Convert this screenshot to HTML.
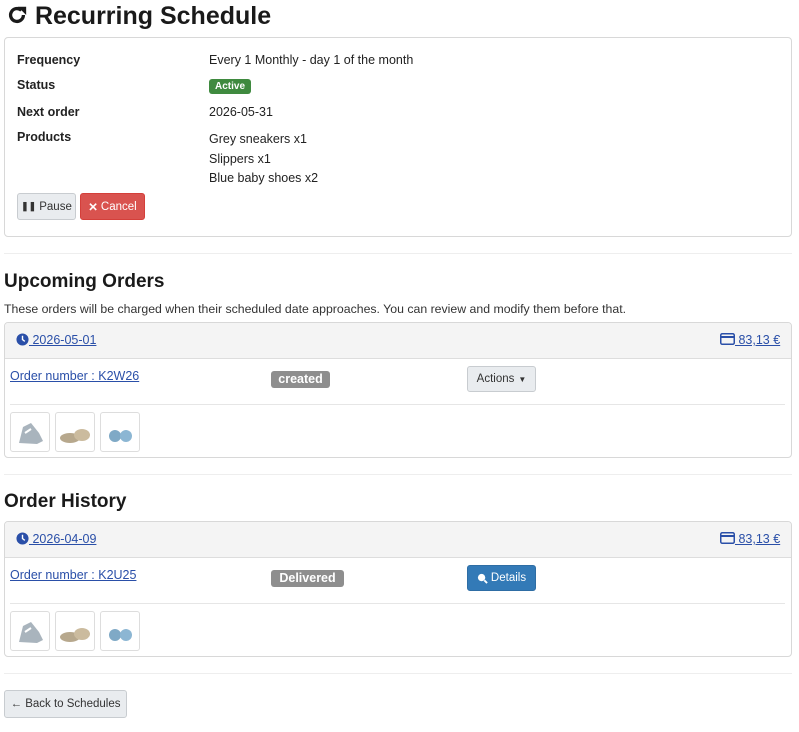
<!DOCTYPE html>
<html><head><meta charset="utf-8"><style>
*{box-sizing:border-box;margin:0;padding:0}
body{width:799px;height:732px;background:#fff;font-family:"Liberation Sans",sans-serif;color:#222;font-size:12.5px;position:relative;overflow:hidden}
.a{position:absolute;white-space:nowrap}
.card{position:absolute;border:1px solid #d8d8d8;border-radius:4px;left:4px;width:788px}
.hr{position:absolute;left:4px;width:788px;height:1px;background:#eee}
.lbl{font-weight:bold;font-size:12.5px}
h2{position:absolute;left:4px;font-size:19px;font-weight:bold;color:#1a1a1a}
a{color:#2a4fa8;text-decoration:underline}
.btn{position:absolute;border:1px solid #c8ccd0;background:#e9ecef;border-radius:3px;font-size:11.5px;color:#333;display:flex;align-items:center;justify-content:center}
.badge{position:absolute;background:#8e8e8e;color:#fff;font-weight:bold;font-size:12.5px;border-radius:3px;text-align:center;line-height:17px;height:17px}
.th{position:absolute;width:40px;height:40px;border:1px solid #ddd;border-radius:3px;background:#fff}
.hd{position:absolute;left:0;top:0;width:786px;height:36px;background:#f4f4f4;border-bottom:1px solid #ddd;border-radius:4px 4px 0 0}
</style></head><body>
<div class="a" style="left:6px;top:2px;font-size:25px;font-weight:bold;color:#1a1a1a">
<svg width="22" height="22" viewBox="0 0 24 24" style="vertical-align:-2px"><path d="M19 12a7 7 0 1 1-2.2-5.1" fill="none" stroke="#1a1a1a" stroke-width="3.6"/><path d="M13 3h9v9z" fill="#1a1a1a"/></svg> Recurring Schedule</div>

<div class="card" style="top:37px;height:200px"></div>
<div class="a lbl" style="left:17px;top:53px">Frequency</div>
<div class="a" style="left:209px;top:53px">Every 1 Monthly - day 1 of the month</div>
<div class="a lbl" style="left:17px;top:78px">Status</div>
<div class="a" style="left:209px;top:79px;background:#3f8a3f;color:#fff;font-size:10px;font-weight:bold;padding:0 6px;line-height:15px;border-radius:3px">Active</div>
<div class="a lbl" style="left:17px;top:105px">Next order</div>
<div class="a" style="left:209px;top:105px">2026-05-31</div>
<div class="a lbl" style="left:17px;top:130px">Products</div>
<div class="a" style="left:209px;top:130px;line-height:19.5px">Grey sneakers x1<br>Slippers x1<br>Blue baby shoes x2</div>
<div class="btn" style="left:17px;top:193px;width:59px;height:27px"><b style="font-size:9px;margin-right:3px">❚❚</b>Pause</div>
<div class="btn" style="left:80px;top:193px;width:65px;height:27px;background:#d9534f;border-color:#d43f3a;color:#fff"><b style="margin-right:3px">✕</b>Cancel</div>

<div class="hr" style="top:253px"></div>
<h2 style="top:271px">Upcoming Orders</h2>
<div class="a" style="left:4px;top:302px;font-size:12.3px;color:#333">These orders will be charged when their scheduled date approaches. You can review and modify them before that.</div>

<div class="card" style="top:322px;height:136px"><div class="hd"></div></div>
<div class="a" style="left:16px;top:333px"><svg width="13" height="13" viewBox="0 0 14 14" style="vertical-align:-2px"><circle cx="7" cy="7" r="6.5" fill="#2a4fa8"/><path d="M7 3v4l2.5 2" stroke="#fff" stroke-width="1.5" fill="none"/></svg><a> 2026-05-01</a></div>
<div class="a" style="left:720px;top:333px"><svg width="15" height="12" viewBox="0 0 15 12" style="vertical-align:-1px"><rect x=".75" y=".75" width="13.5" height="10.5" rx="1.5" fill="none" stroke="#2a4fa8" stroke-width="1.5"/><rect x="1" y="3" width="13" height="2" fill="#2a4fa8"/></svg><a> 83,13 €</a></div>
<div class="a" style="left:10px;top:369px"><a>Order number : K2W26</a></div>
<div class="badge" style="left:271px;top:371px;width:59px">created</div>
<div class="btn" style="left:467px;top:366px;width:69px;height:26px">Actions <span style="font-size:8px;margin-left:4px">▼</span></div>
<div class="a" style="left:10px;top:404px;width:775px;height:1px;background:#e6e6e6"></div>

<div class="hr" style="top:474px"></div>
<h2 style="top:491px">Order History</h2>
<div class="card" style="top:521px;height:136px"><div class="hd"></div></div>
<div class="a" style="left:16px;top:532px"><svg width="13" height="13" viewBox="0 0 14 14" style="vertical-align:-2px"><circle cx="7" cy="7" r="6.5" fill="#2a4fa8"/><path d="M7 3v4l2.5 2" stroke="#fff" stroke-width="1.5" fill="none"/></svg><a> 2026-04-09</a></div>
<div class="a" style="left:720px;top:532px"><svg width="15" height="12" viewBox="0 0 15 12" style="vertical-align:-1px"><rect x=".75" y=".75" width="13.5" height="10.5" rx="1.5" fill="none" stroke="#2a4fa8" stroke-width="1.5"/><rect x="1" y="3" width="13" height="2" fill="#2a4fa8"/></svg><a> 83,13 €</a></div>
<div class="a" style="left:10px;top:568px"><a>Order number : K2U25</a></div>
<div class="badge" style="left:271px;top:570px;width:73px">Delivered</div>
<div class="btn" style="left:467px;top:565px;width:69px;height:26px;background:#337ab7;border-color:#2e6da4;color:#fff"><svg width="11" height="11" viewBox="0 0 12 12" style="margin-right:3px"><circle cx="5" cy="5" r="4" fill="#fff"/><path d="M8 8l3 3" stroke="#fff" stroke-width="2"/></svg>Details</div>
<div class="a" style="left:10px;top:603px;width:775px;height:1px;background:#e6e6e6"></div>

<div class="hr" style="top:673px"></div>
<div class="btn" style="left:4px;top:690px;width:123px;height:28px">← Back to Schedules</div>

<!-- thumbnails -->
<div id="t"></div>
<div class="th" style="left:10px;top:412px"><svg width="38" height="38"><path d="M8 30l4-16 8-4 8 10 4 8-6 3z" fill="#a9b4bd"/><path d="M14 20l6-4" stroke="#fff" stroke-width="2"/></svg></div>
<div class="th" style="left:55px;top:412px"><svg width="38" height="38"><ellipse cx="14" cy="25" rx="10" ry="5" fill="#b7a88d"/><ellipse cx="26" cy="22" rx="8" ry="6" fill="#cbbb9e"/></svg></div>
<div class="th" style="left:100px;top:412px"><svg width="38" height="38"><ellipse cx="14" cy="23" rx="6" ry="6" fill="#7fa9c6"/><ellipse cx="25" cy="23" rx="6" ry="6" fill="#8cb6d3"/></svg></div>
<div class="th" style="left:10px;top:611px"><svg width="38" height="38"><path d="M8 30l4-16 8-4 8 10 4 8-6 3z" fill="#a9b4bd"/><path d="M14 20l6-4" stroke="#fff" stroke-width="2"/></svg></div>
<div class="th" style="left:55px;top:611px"><svg width="38" height="38"><ellipse cx="14" cy="25" rx="10" ry="5" fill="#b7a88d"/><ellipse cx="26" cy="22" rx="8" ry="6" fill="#cbbb9e"/></svg></div>
<div class="th" style="left:100px;top:611px"><svg width="38" height="38"><ellipse cx="14" cy="23" rx="6" ry="6" fill="#7fa9c6"/><ellipse cx="25" cy="23" rx="6" ry="6" fill="#8cb6d3"/></svg></div>
</body></html>
